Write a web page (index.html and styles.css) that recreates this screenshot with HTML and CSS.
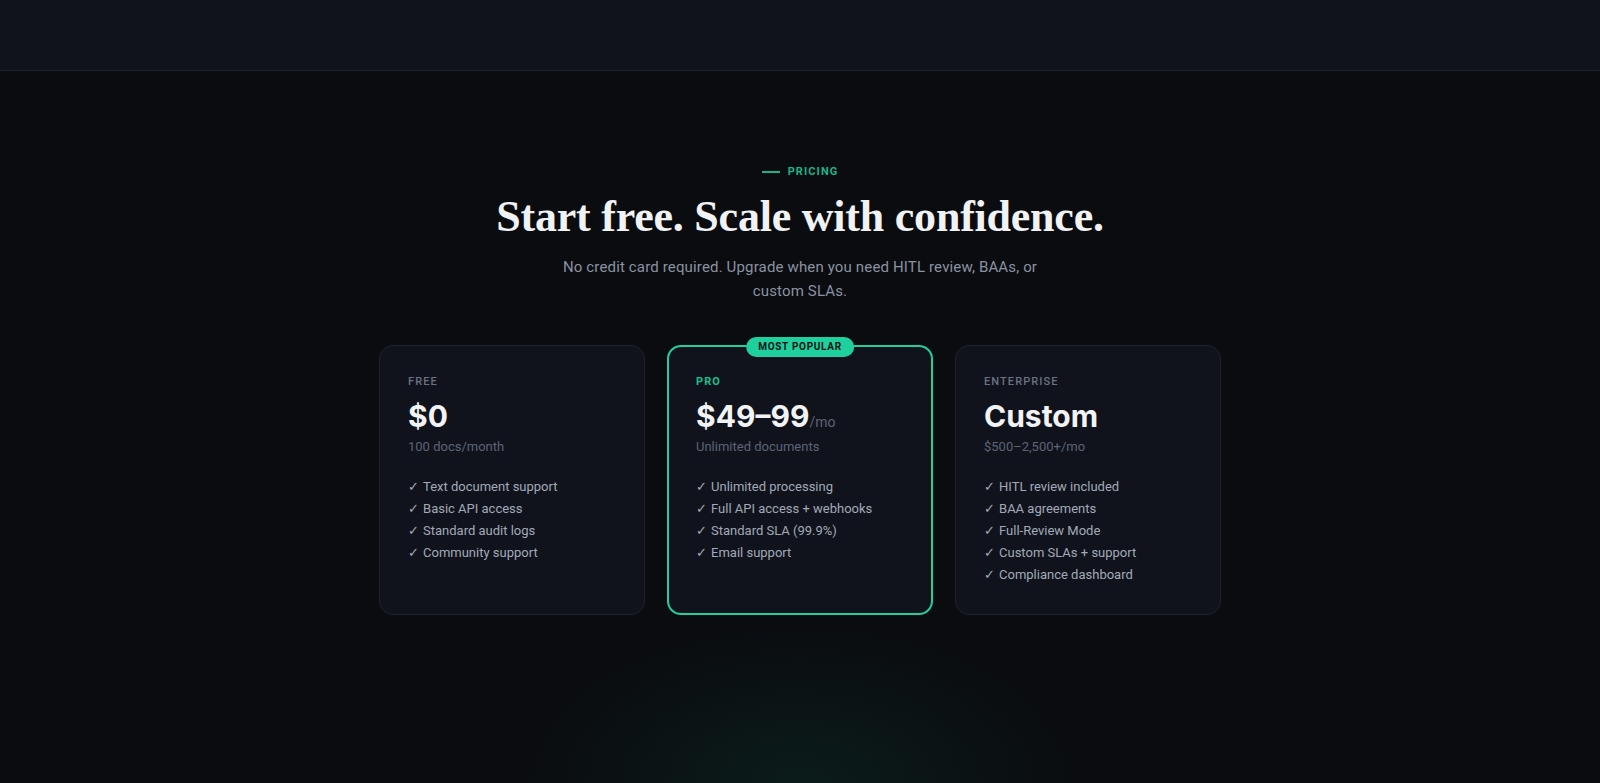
FILE: index.html
```html
<!DOCTYPE html>
<html lang="en">
<head>
    <meta charset="UTF-8">
    <meta name="viewport" content="width=device-width, initial-scale=1.0">
    <title>Pricing</title>
    <link rel="stylesheet" href="styles.css">
</head>
<body>
    <header class="site-header"></header>

    <main class="pricing">
        <div class="section-head">
            <div class="eyebrow"><span class="eyebrow-line"></span>PRICING</div>
            <h2>Start free. Scale with confidence.</h2>
            <p class="lead">No credit card required. Upgrade when you need HITL review, BAAs, or custom SLAs.</p>
        </div>

        <div class="plans">
            <div class="plan">
                <div class="plan-name">FREE</div>
                <div class="plan-price">$0</div>
                <div class="plan-note">100 docs/month</div>
                <ul class="plan-features">
                    <li>Text document support</li>
                    <li>Basic API access</li>
                    <li>Standard audit logs</li>
                    <li>Community support</li>
                </ul>
            </div>

            <div class="plan plan-featured">
                <span class="badge">MOST POPULAR</span>
                <div class="plan-name">PRO</div>
                <div class="plan-price">$49–99<span class="per">/mo</span></div>
                <div class="plan-note">Unlimited documents</div>
                <ul class="plan-features">
                    <li>Unlimited processing</li>
                    <li>Full API access + webhooks</li>
                    <li>Standard SLA (99.9%)</li>
                    <li>Email support</li>
                </ul>
            </div>

            <div class="plan">
                <div class="plan-name">ENTERPRISE</div>
                <div class="plan-price">Custom</div>
                <div class="plan-note">$500–2,500+/mo</div>
                <ul class="plan-features">
                    <li>HITL review included</li>
                    <li>BAA agreements</li>
                    <li>Full-Review Mode</li>
                    <li>Custom SLAs + support</li>
                    <li>Compliance dashboard</li>
                </ul>
            </div>
        </div>
    </main>
</body>
</html>
```

FILE: styles.css
```css
body {
    font-family: Roboto, "Liberation Sans", sans-serif;
    background-color: #0a0c10;
    background-image: radial-gradient(ellipse 280px 160px at 50% 100%, rgba(22, 163, 120, 0.1), transparent);
    background-repeat: no-repeat;
    color: #eef0f3;
    margin: 0;
    min-height: 100vh;
}
.site-header {
    height: 70px;
    background-color: #10131c;
    border-bottom: 1px solid #1d2231;
}
.pricing {
    padding: 93px 20px 60px;
}
.section-head {
    display: flex;
    flex-direction: column;
    align-items: center;
    text-align: center;
}
.eyebrow {
    display: flex;
    align-items: center;
    gap: 8px;
    font-size: 11px;
    line-height: 16px;
    font-weight: 700;
    letter-spacing: 0.1em;
    color: #17b48a;
}
.eyebrow-line {
    width: 18px;
    height: 2px;
    background-color: #17b48a;
}
.section-head h2 {
    font-family: "Liberation Serif", "DejaVu Serif", serif;
    font-size: 44px;
    line-height: 1.15;
    font-weight: 700;
    letter-spacing: -0.005em;
    color: #f1f2f4;
    margin: 12px 0 0;
}
.lead {
    max-width: 490px;
    font-size: 15px;
    line-height: 24px;
    letter-spacing: 0.01em;
    color: #8a92a2;
    margin: 12px 0 0;
}
.plans {
    display: grid;
    grid-template-columns: repeat(3, 1fr);
    gap: 22px;
    max-width: 842px;
    margin: 42px auto 0;
}
.plan {
    position: relative;
    background-color: #10131c;
    border: 1px solid #1e2332;
    border-radius: 14px;
    padding: 28px;
}
.plan-featured {
    border: 2px solid #1fcf9e;
    padding: 27px;
}
.badge {
    position: absolute;
    top: 0;
    left: 50%;
    transform: translate(-50%, -50%);
    background-color: #1fcf9e;
    color: #07140f;
    font-size: 10px;
    line-height: 20px;
    font-weight: 700;
    letter-spacing: 0.07em;
    padding: 0 12px;
    border-radius: 10px;
    white-space: nowrap;
}
.plan-name {
    font-size: 11px;
    line-height: 16px;
    font-weight: 500;
    letter-spacing: 0.1em;
    color: #6a7283;
}
.plan-featured .plan-name {
    color: #17c08f;
    font-weight: 700;
}
.plan-price {
    font-family: Inter, Roboto, sans-serif;
    font-size: 30px;
    line-height: 36px;
    font-weight: 700;
    color: #f2f3f5;
    margin-top: 8px;
}
.per {
    font-family: Roboto, sans-serif;
    font-size: 14px;
    line-height: 1;
    font-weight: 400;
    color: #5c6475;
}
.plan-note {
    font-size: 13px;
    line-height: 20px;
    color: #5c6475;
    margin-top: 3px;
}
.plan-features {
    list-style: none;
    padding: 0;
    margin: 19px 0 0;
    font-size: 13px;
    line-height: 22px;
    color: #a2aab8;
}
.plan-features li::before {
    content: "✓ ";
    font-family: "DejaVu Sans", sans-serif;
    font-size: 13px;
}
```
